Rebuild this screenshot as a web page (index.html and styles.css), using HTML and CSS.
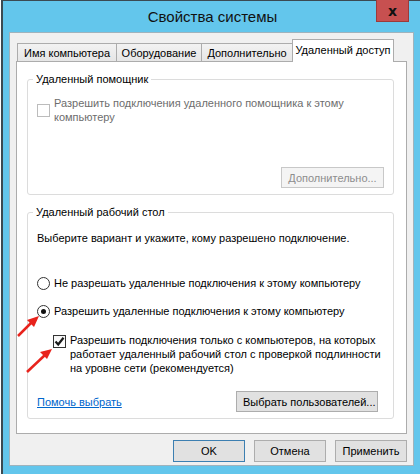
FILE: index.html
```html
<!DOCTYPE html>
<html lang="ru">
<head>
    <meta charset="UTF-8">
    <title>Свойства системы</title>
    <link rel="stylesheet" href="styles.css">
</head>
<body>
<div class="window">
    <div class="titlebar">
        <span class="title">Свойства системы</span>
        <button class="close">x</button>
    </div>
    <div class="client">
        <div class="tabs">
            <div class="tab tab-name">Имя компьютера</div>
            <div class="tab tab-hw">Оборудование</div>
            <div class="tab tab-adv">Дополнительно</div>
            <div class="tab tab-remote active">Удаленный доступ</div>
        </div>
        <div class="pane">
            <fieldset class="group group-assist">
                <legend>Удаленный помощник</legend>
                <div class="option disabled">
                    <span class="check"></span>
                    <span class="label">Разрешить подключения удаленного помощника к этому<br>компьютеру</span>
                </div>
                <div class="actions">
                    <button class="btn btn-more" disabled>Дополнительно...</button>
                </div>
            </fieldset>

            <fieldset class="group group-rdp">
                <legend>Удаленный рабочий стол</legend>
                <div class="intro">Выберите вариант и укажите, кому разрешено подключение.</div>
                <div class="option radio-first">
                    <span class="radio"></span>
                    <span class="label">Не разрешать удаленные подключения к этому компьютеру</span>
                </div>
                <div class="option">
                    <span class="radio checked"></span>
                    <span class="label">Разрешить удаленные подключения к этому компьютеру</span>
                </div>
                <div class="option sub">
                    <span class="check checked">
                        <svg width="11" height="11" viewBox="0 0 11 11"><path d="M1.5 5.5 L4.2 8.5 L9.5 1.8" fill="none" stroke="#1a1a1a" stroke-width="2.2"/></svg>
                    </span>
                    <span class="label">Разрешить подключения только с компьютеров, на которых<br>работает удаленный рабочий стол с проверкой подлинности<br>на уровне сети (рекомендуется)</span>
                </div>
                <div class="actions actions-split">
                    <a class="link" href="#">Помочь выбрать</a>
                    <button class="btn btn-users">Выбрать пользователей...</button>
                </div>
            </fieldset>
        </div>
        <div class="dialog-buttons">
            <button class="btn btn-dialog default">OK</button>
            <button class="btn btn-dialog">Отмена</button>
            <button class="btn btn-dialog">Применить</button>
        </div>
    </div>
</div>

<!-- красные стрелки поверх скриншота -->
<svg class="arrows" width="420" height="475" viewBox="0 0 420 475">
    <line x1="18" y1="336" x2="32" y2="322" stroke="#e8231c" stroke-width="2.5"/>
    <polygon points="39,316 27,320 34,327" fill="#e8231c"/>
    <line x1="27" y1="372" x2="45" y2="355" stroke="#e8231c" stroke-width="2.5"/>
    <polygon points="52,349 40,352 47,359" fill="#e8231c"/>
</svg>
</body>
</html>
```

FILE: styles.css
```css
body {
    margin: 0;
    background: #fff;
    font-family: "Liberation Sans", Arial, sans-serif;
    font-size: 11px;
    color: #000;
    overflow: hidden;
    width: 420px;
    height: 475px;
}
.window {
    margin-left: 1px;
    width: 422px;
    height: 474px;
    border-top: 1px solid #3b4a52;
    border-left: 2px solid #3b4a52;
    background: #63c6ec;
    box-sizing: border-box;
    padding: 0 9px 0 6px;
    display: flex;
    flex-direction: column;
}
.titlebar {
    height: 31px;
    display: flex;
    align-items: center;
    justify-content: center;
    position: relative;
}
.title {
    font-size: 15px;
    color: #111;
    margin-left: 2px;
}
.close {
    position: absolute;
    top: -1px;
    right: 5px;
    width: 33px;
    height: 22px;
    background: #c75050;
    border: 1px solid #9c3a3a;
    border-top: none;
    color: #111;
    font-family: "DejaVu Sans", sans-serif;
    font-weight: bold;
    font-size: 14px;
    line-height: 16px;
    padding: 0;
}
.client {
    background: #f0f0f0;
    border: 1px solid #9fb3bd;
    height: 434px;
    box-sizing: border-box;
    padding: 6px 6px 0 6px;
}
.tabs {
    display: flex;
    align-items: flex-end;
    height: 22px;
    padding-left: 1px;
    position: relative;
    z-index: 1;
}
.tab {
    height: 18px;
    line-height: 18px;
    text-align: center;
    border: 1px solid #acacac;
    border-bottom: none;
    background: linear-gradient(#f2f2f2, #e6e6e6);
    margin-right: -1px;
    white-space: nowrap;
    box-sizing: border-box;
}
.tab-name { width: 100px; }
.tab-hw { width: 86px; }
.tab-adv { width: 92px; }
.tab-remote { width: 102px; }
.tab.active {
    height: 23px;
    line-height: 21px;
    background: #fff;
    margin-bottom: -1px;
}
.pane {
    background: #fff;
    border: 1px solid #acacac;
    height: 373px;
    box-sizing: border-box;
    padding: 10px 12px 0 10px;
}
.group {
    border: 1px solid #dcdcdc;
    border-radius: 3px;
    margin: 0;
    padding: 0 9px 0 5px;
}
.group legend {
    padding: 0 3px;
    line-height: 15px;
}
.group-assist {
    height: 123px;
    box-sizing: border-box;
}
.group-rdp {
    margin-top: 10px;
    height: 214px;
    box-sizing: border-box;
}
.option {
    display: flex;
    align-items: flex-start;
    line-height: 14px;
    margin-left: 4px;
    white-space: nowrap;
}
.group-assist .option {
    margin-top: 9px;
}
.option .label {
    margin-left: 4px;
}
.option.disabled {
    color: #6d6d6d;
}
.check {
    width: 11px;
    height: 11px;
    border: 1px solid #333;
    background: linear-gradient(#f6f6f6, #fff);
    margin-top: 2px;
    flex-shrink: 0;
    display: flex;
    align-items: center;
    justify-content: center;
}
.option.disabled .check {
    border-color: #bcbcbc;
    background: #fff;
    margin-top: 8px;
}
.radio {
    width: 11px;
    height: 11px;
    border: 1px solid #333;
    border-radius: 50%;
    background: #fff;
    margin-top: 1px;
    flex-shrink: 0;
    display: flex;
    align-items: center;
    justify-content: center;
}
.radio.checked::after {
    content: "";
    width: 5px;
    height: 5px;
    border-radius: 50%;
    background: #111;
}
.intro {
    line-height: 14px;
    margin: 11px 0 0 4px;
    white-space: nowrap;
}
.radio-first {
    margin-top: 31px;
}
.radio-first + .option {
    margin-top: 14px;
}
.option.sub {
    margin-top: 15px;
    margin-left: 20px;
}
.actions {
    display: flex;
    justify-content: flex-end;
    margin-top: 43px;
}
.actions-split {
    justify-content: space-between;
    align-items: center;
    margin-top: 16px;
    margin-left: 4px;
}
.link {
    color: #0066cc;
}
.btn {
    font-family: inherit;
    font-size: 11px;
    color: #000;
    background: #e1e1e1;
    border: 1px solid #adadad;
    height: 21px;
    padding: 0 6px;
    white-space: nowrap;
}
.btn:disabled {
    color: #8d8d8d;
    background: #f4f4f4;
    border-color: #c8c8c8;
}
.btn-more {
    width: 103px;
}
.btn-users {
    width: 142px;
    margin-right: 6px;
}
.dialog-buttons {
    display: flex;
    justify-content: flex-end;
    gap: 9px;
    margin-top: 6px;
    padding-right: 0;
}
.btn-dialog {
    width: 72px;
    height: 22px;
}
.btn-dialog.default {
    border-color: #3c7fb1;
}
.arrows {
    position: absolute;
    left: 0;
    top: 0;
    pointer-events: none;
}
```
